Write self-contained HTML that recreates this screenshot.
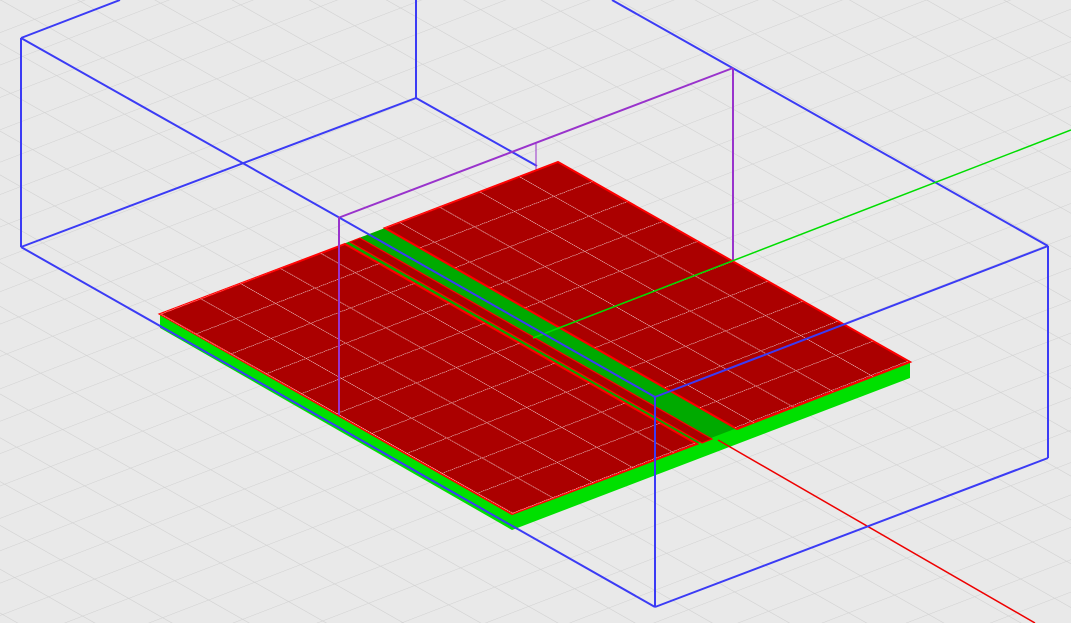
<!DOCTYPE html>
<html><head><meta charset="utf-8"><style>html,body{margin:0;padding:0;background:#e9e9e9;overflow:hidden}svg{display:block}</style></head>
<body>
<svg width="1071" height="623" viewBox="0 0 1071 623" xmlns="http://www.w3.org/2000/svg">
<defs>
<pattern id="bg" patternUnits="userSpaceOnUse" width="10" height="10" patternTransform="matrix(4.6 -1.77 3.4 1.93 0 0)">
<path d="M0 0H10M0 0V10" stroke="#d0d0d0" stroke-width="0.3" fill="none"/>
</pattern>
<pattern id="pg" patternUnits="userSpaceOnUse" width="10" height="10" patternTransform="matrix(3.98 -1.53 3.52 1.99 160 314)">
<path d="M0 0H10M0 0V10" stroke="#ffffff" stroke-width="0.38" stroke-dasharray="0.3 0.2" fill="none"/>
</pattern>
</defs>
<rect width="1071" height="623" fill="#e9e9e9"/>
<rect width="1071" height="623" fill="url(#bg)"/>
<g stroke="#3b3bf5" stroke-width="2" fill="none">
<line x1="21" y1="38" x2="120" y2="0"/>
<line x1="21" y1="38" x2="21" y2="247"/>
<line x1="416" y1="0" x2="416" y2="98"/>
<line x1="416" y1="98" x2="21" y2="247"/>
<line x1="416" y1="98" x2="537" y2="166"/>
<line x1="21" y1="38" x2="340" y2="218"/>
<line x1="612" y1="0" x2="1048" y2="246"/>
</g>
<g stroke="#9933cc" stroke-width="2" fill="none">
<line x1="338" y1="218" x2="733" y2="68"/>
<line x1="733" y1="68" x2="733" y2="265"/>
</g>
<line x1="536" y1="143" x2="536" y2="340" stroke="#9933cc" stroke-width="1"/>
<polygon points="160,314 558,162 910,362 910,378 512,530 160,328" fill="#00e000"/>
<polygon points="160,314 558,162 910,362 512,514" fill="#00aa00"/>
<polygon points="160,314 345,244 697,444 512,514" fill="#ab0000" stroke="#ff0000" stroke-width="2"/>
<polygon points="350,242 360,238 712,439 702,443" fill="#ab0000" stroke="#ff0000" stroke-width="1.2"/>
<polygon points="385,228 558,162 910,362 737,429" fill="#ab0000" stroke="#ff0000" stroke-width="2"/>
<polygon points="160,314 345,244 697,444 512,514" fill="url(#pg)"/>
<polygon points="385,228 558,162 910,362 737,429" fill="url(#pg)"/>
<line x1="533" y1="338" x2="1071" y2="130" stroke="#00dd00" stroke-width="1.5"/>
<line x1="718" y1="440" x2="1035" y2="623" stroke="#ee0000" stroke-width="1.5"/>
<g stroke="#3b3bf5" stroke-width="2" fill="none">
<line x1="340" y1="218" x2="655" y2="397"/>
<line x1="21" y1="247" x2="655" y2="607"/>
<line x1="655" y1="397" x2="1048" y2="246"/>
<line x1="655" y1="607" x2="1048" y2="458"/>
<line x1="1048" y1="246" x2="1048" y2="458"/>
<line x1="655" y1="397" x2="655" y2="607"/>
</g>
<line x1="339" y1="218" x2="339" y2="415" stroke="#9933cc" stroke-width="2"/>
</svg>
</body></html>
